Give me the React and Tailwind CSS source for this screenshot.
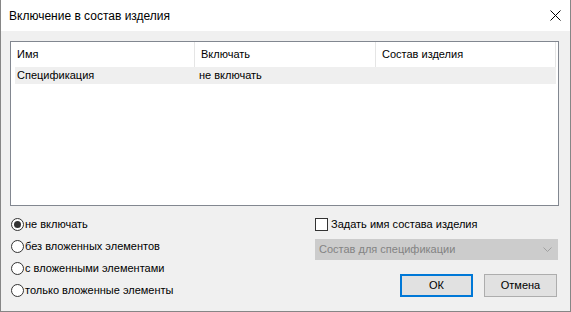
import React from "react";

function Radio({ checked, label }) {
  return (
    <div className="flex h-[22px] items-center">
      <svg width="13" height="13" viewBox="0 0 13 13" className="ml-[10px] shrink-0">
        <circle cx="6.5" cy="6.5" r="6" fill="#ffffff" stroke="#333333" strokeWidth="1" />
        {checked && <circle cx="6.5" cy="6.5" r="3.5" fill="#333333" />}
      </svg>
      <span className="ml-[1px] text-[11px] leading-none text-black">{label}</span>
    </div>
  );
}

export default function App() {
  const font = { fontFamily: '"Liberation Sans", Arial, sans-serif' };
  return (
    <div className="w-[571px] h-[312px] bg-white" style={font}>
      <div className="flex h-[312px] w-[571px] flex-col border-x border-b border-[#868686] bg-[#f0f0f0]">
        {/* title bar */}
        <div className="flex h-[31px] shrink-0 items-center justify-between bg-white pl-[8px] pr-[9px]">
          <span className="text-[12px] text-black">Включение в состав изделия</span>
          <svg width="11" height="11" viewBox="0 0 11 11">
            <path d="M0.5 0.5 L10.5 10.5 M10.5 0.5 L0.5 10.5" stroke="#000" strokeWidth="1" />
          </svg>
        </div>

        {/* list */}
        <div className="ml-[9px] mt-[10px] h-[165px] w-[549px] border border-[#828790] bg-white">
          <div className="flex h-[25px] items-center">
            <div className="flex h-full w-[184px] items-center border-r border-[#e5e5e5] pl-[6px] text-[11px] text-black">Имя</div>
            <div className="flex h-full w-[181px] items-center border-r border-[#e5e5e5] pl-[6px] text-[11px] text-black">Включать</div>
            <div className="flex h-full w-[180px] items-center border-r border-[#e5e5e5] pl-[6px] text-[11px] text-black">Состав изделия</div>
          </div>
          <div className="ml-[4px] flex h-[17px] w-[541px] items-center bg-[#efefef] text-[11px] text-black">
            <span className="w-[184px] pl-[2px]">Спецификация</span>
            <span>не включать</span>
          </div>
        </div>

        {/* bottom */}
        <div className="mt-[7px] flex">
          <div className="flex w-[314px] flex-col">
            <Radio checked label="не включать" />
            <Radio label="без вложенных элементов" />
            <Radio label="с вложенными элементами" />
            <Radio label="только вложенные элементы" />
          </div>
          <div className="flex w-[243px] flex-col">
            <div className="flex h-[22px] items-center">
              <div className="h-[13px] w-[13px] shrink-0 border border-[#333333] bg-white" />
              <span className="ml-[3px] text-[11px] leading-none text-black">Задать имя состава изделия</span>
            </div>
            <div className="mt-[4px] flex h-[21px] items-center justify-between border border-[#cccccc] bg-[#cccccc] pl-[3px] pr-[5px]">
              <span className="text-[11px] leading-none text-[#838383]">Состав для спецификации</span>
              <svg width="9" height="5" viewBox="0 0 9 5">
                <path d="M0.5 0.5 L4.5 4.5 L8.5 0.5" fill="none" stroke="#a0a0a0" strokeWidth="1" />
              </svg>
            </div>
            <div className="mt-[14px] flex justify-end gap-[11px] pr-[1px]">
              <div className="flex h-[23px] w-[73px] items-center justify-center border-2 border-[#0078d7] bg-[#e1e1e1] text-[11px] text-black">ОК</div>
              <div className="flex h-[23px] w-[73px] items-center justify-center border border-[#adadad] bg-[#e1e1e1] text-[11px] text-black">Отмена</div>
            </div>
          </div>
        </div>
      </div>
    </div>
  );
}
